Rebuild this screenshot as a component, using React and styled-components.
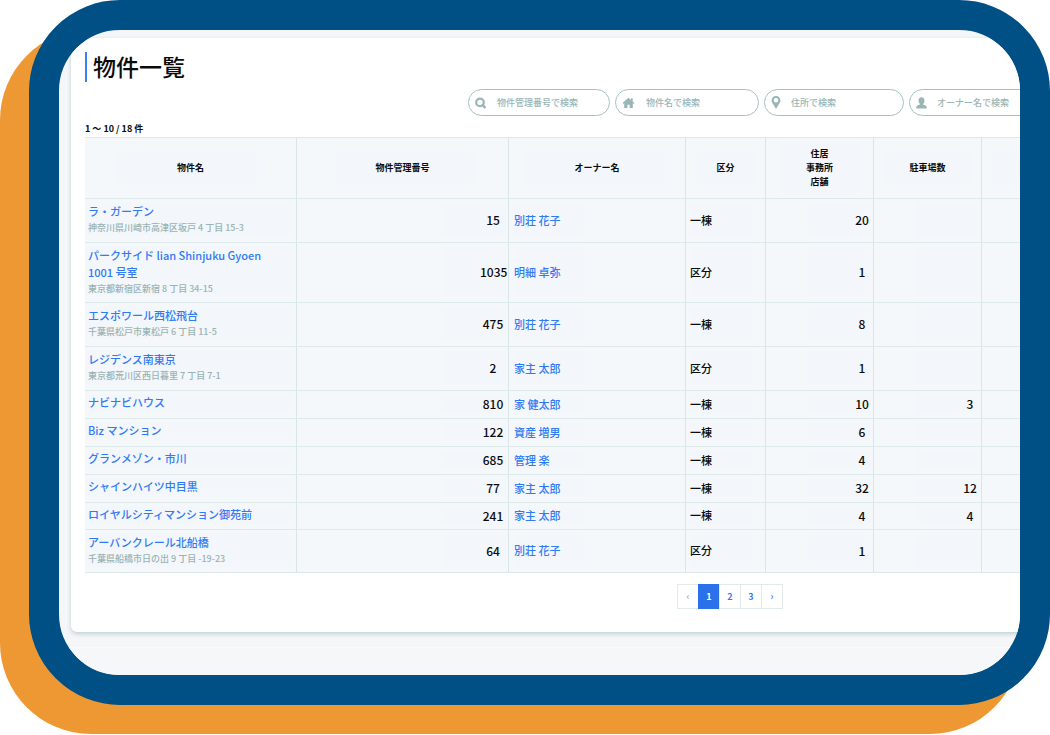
import React from "react";
import styled, { createGlobalStyle } from "styled-components";

const GlobalStyle = createGlobalStyle`
  *, *::before, *::after { box-sizing: border-box; }
  body {
    margin: 0;
    background: #fff;
    color: #0b0b0b;
    font-family: "Noto Sans CJK JP", sans-serif;
    font-size: 11px;
    font-weight: 500;
  }
`;

const Stage = styled.div`
  position: relative;
  padding: 0 0 29px 29px;
  overflow: hidden;
  &::before {
    content: "";
    position: absolute;
    inset: 29px 29px 0 0;
    border-radius: 91px;
    background: #ee9834;
  }
`;

const Frame = styled.div`
  position: relative;
  overflow: hidden;
  border: 30px solid #004f85;
  border-radius: 91px;
  background: #f4f6f8;
  padding: 8px 0 0 12px;
`;

const Card = styled.main`
  min-width: 1318px;
  padding: 14px 14px 23px;
  border-radius: 6px;
  background: #fff;
  box-shadow: 0 2px 4px #c0d0d4;
`;

const Title = styled.h1`
  margin: 0;
  padding: 0 0 2px 6px;
  border-left: 2px solid #3b7ff5;
  font-size: 23px;
  font-weight: 500;
  line-height: 28px;
`;

const SearchBar = styled.form`
  display: flex;
  gap: 5px;
  margin-top: 7px;
  padding-left: 383px;
`;

const SearchField = styled.label`
  display: flex;
  align-items: center;
  width: ${(p) => p.$width}px;
  height: 27px;
  padding-left: 6px;
  gap: ${(p) => p.$gap}px;
  border: 1px solid #a6bfc0;
  border-radius: 14px;
  color: #9ab5b5;
  svg { flex: none; }
`;

const SearchInput = styled.input`
  flex: 1;
  min-width: 0;
  padding: 0;
  border: 0;
  outline: 0;
  background: transparent;
  font: 500 9px/14px "Noto Sans CJK JP", sans-serif;
  &::placeholder { color: #9ab5b5; opacity: 1; }
`;

const Count = styled.p`
  margin: 6px 0 1px;
  font-size: 9px;
  font-weight: 700;
  line-height: 14px;
`;

const Table = styled.table`
  width: 100%;
  table-layout: fixed;
  border-collapse: separate;
  border-spacing: 0;
  border-top: 1px solid #dde8ea;
  background: #f4f8fa;
`;

const Col = styled.col`
  width: ${(p) => (p.$width ? `${p.$width}px` : "auto")};
`;

const Row = styled.tr`
  height: ${(p) => p.$height}px;
`;

const Head = styled.th`
  padding: 0;
  border-right: 1px solid #d9e5e7;
  border-bottom: 1px solid #dde9eb;
  font-size: 9px;
  font-weight: 700;
  line-height: 14px;
`;

const HeadPatch = styled.div`
  display: flex;
  align-items: center;
  justify-content: center;
  width: ${(p) => p.$width}px;
  height: ${(p) => (p.$tall ? 54 : 34)}px;
  margin: 0 auto;
  background: #f3f6fa;
  white-space: pre-line;
`;

const Cell = styled.td`
  padding: 3px 2px 5px ${(p) => p.$left || 0}px;
  border-right: 1px solid #d9e5e7;
  border-bottom: 1px solid #dde9eb;
  vertical-align: ${(p) => (p.$top ? "top" : "middle")};
`;

const NamePatch = styled.div`
  width: 206px;
  padding: ${(p) => (p.$tall ? 1 : 0)}px 0 0 3px;
  background: #f3f6fa;
`;

const TextPatch = styled.div`
  width: ${(p) => p.$width}px;
  line-height: ${(p) => p.$height - 10}px;
  background: #f3f6fa;
`;

const NumberPatch = styled.div`
  width: 64px;
  height: ${(p) => p.$height - 10}px;
  margin-left: auto;
  padding-left: ${(p) => p.$inset}px;
  background: #f3f6fa;
  font-size: 12px;
  line-height: ${(p) => p.$height - 10}px;
  text-align: center;
`;

const Link = styled.a`
  color: #2f7bf6;
  text-decoration: none;
  white-space: pre-line;
`;

const NameLink = styled(Link)`
  display: block;
  line-height: 17px;
`;

const Address = styled.div`
  color: #9ab3b3;
  font-size: 9px;
  line-height: 16px;
`;

const Pager = styled.nav`
  display: flex;
  justify-content: center;
  margin-top: 11px;
`;

const PageButton = styled.button`
  width: 22px;
  height: 25px;
  margin: 0;
  padding: 0;
  border: 1px solid ${(p) => (p.$active ? "#2b72ea" : "#e2eaec")};
  background: ${(p) => (p.$active ? "#2b72ea" : "#fff")};
  color: ${(p) => (p.$active ? "#fff" : p.disabled ? "#9ab3b3" : "#2f7bf6")};
  font: 700 9px/14px "Noto Sans CJK JP", sans-serif;
  & + & { margin-left: -1px; }
`;

const Footer = styled.footer`
  height: 28px;
  margin: 15px 0 0 -12px;
  border-top: 1px solid #fafbfc;
  background: #f5f7f9;
`;

const SearchIcon = () => (
  <svg width="12" height="12" viewBox="0 0 12 12" fill="none" stroke="currentColor" aria-hidden="true">
    <circle cx="5" cy="5.4" r="3.8" strokeWidth="2.2" />
    <path d="M7.600 8l2 2.200" strokeWidth="2.600" strokeLinecap="round" />
  </svg>
);

const HomeIcon = () => (
  <svg width="13" height="12" viewBox="0 0 13 12" fill="currentColor" aria-hidden="true">
    <path d="M6.5.8L.5 6.1l.7.8 1-.8v4.8h3.2V7.8h2.2v3.1h3.2V6.1l1 .8.7-.8-1.8-1.6V1.2H9v1.7z" />
  </svg>
);

const PinIcon = () => (
  <svg width="10" height="13" viewBox="0 0 9 13" fill="currentColor" fillRule="evenodd" aria-hidden="true">
    <path d="M4.5 0A4.4 4.4 0 0 0 .1 4.4c0 1 .3 1.8.8 2.6l3.6 6 3.6-6c.5-.8.8-1.6.8-2.6A4.4 4.4 0 0 0 4.5 0zm0 2a2.3 2.3 0 1 1 0 4.6 2.3 2.3 0 0 1 0-4.6z" />
  </svg>
);

const PersonIcon = () => (
  <svg width="11" height="12" viewBox="0 0 11 12" fill="currentColor" aria-hidden="true">
    <path d="M5.5.3C3.700.3 2.500 1.600 2.500 3.400c0 1.500.6 2.700 1.500 3.500v.5C2 8 .3 8.500.3 10.300v1.200h10.400v-1.200C10.700 8.500 9 8 7 7.400v-.5c.9-.8 1.500-2 1.500-3.500C8.500 1.600 7.300.3 5.500.3z" />
  </svg>
);

const searches = [
  { Icon: SearchIcon, label: "物件管理番号で検索", width: 142, gap: 10 },
  { Icon: HomeIcon, label: "物件名で検索", width: 144, gap: 11 },
  { Icon: PinIcon, label: "住所で検索", width: 140, gap: 10 },
  { Icon: PersonIcon, label: "オーナー名で検索", width: 144, gap: 10 },
];

const columns = [
  { label: "物件名", width: 212, patch: 145 },
  { label: "物件管理番号", width: 212, patch: 147 },
  { label: "オーナー名", width: 177, patch: 147 },
  { label: "区分", width: 80, patch: 61 },
  { label: "住居\n事務所\n店舗", width: 108, patch: 78, tall: true },
  { label: "駐車場数", width: 108, patch: 86 },
  { label: "", width: 108, patch: 88 },
  { label: "", width: 0, patch: 88 },
];

const rows = [
  { name: "ラ・ガーデン", address: "神奈川県川崎市高津区坂戸 4 丁目 15-3", no: 15, owner: "別荘 花子", type: "一棟", units: 20, height: 44 },
  { name: "パークサイド lian Shinjuku Gyoen\n1001 号室", address: "東京都新宿区新宿 8 丁目 34-15", no: 1035, owner: "明細 卓弥", type: "区分", units: 1, height: 60 },
  { name: "エスポワール西松飛台", address: "千葉県松戸市東松戸 6 丁目 11-5", no: 475, owner: "別荘 花子", type: "一棟", units: 8, height: 44 },
  { name: "レジデンス南東京", address: "東京都荒川区西日暮里 7 丁目 7-1", no: 2, owner: "家主 太郎", type: "区分", units: 1, height: 44 },
  { name: "ナビナビハウス", no: 810, owner: "家 健太郎", type: "一棟", units: 10, parking: 3, height: 28 },
  { name: "Biz マンション", no: 122, owner: "資産 増男", type: "一棟", units: 6, height: 28 },
  { name: "グランメゾン・市川", no: 685, owner: "管理 楽", type: "一棟", units: 4, height: 28 },
  { name: "シャインハイツ中目黒", no: 77, owner: "家主 太郎", type: "一棟", units: 32, parking: 12, height: 28 },
  { name: "ロイヤルシティマンション御苑前", no: 241, owner: "家主 太郎", type: "一棟", units: 4, parking: 4, height: 27 },
  { name: "アーバンクレール北船橋", address: "千葉県船橋市日の出 9 丁目 -19-23", no: 64, owner: "別荘 花子", type: "区分", units: 1, height: 43 },
];

export default function App() {
  return (
    <>
      <GlobalStyle />
      <Stage>
        <Frame>
          <Card>
            <Title>物件一覧</Title>
            <SearchBar>
              {searches.map(({ Icon, label, width, gap }) => (
                <SearchField key={label} $width={width} $gap={gap}>
                  <Icon />
                  <SearchInput type="text" placeholder={label} aria-label={label} />
                </SearchField>
              ))}
            </SearchBar>
            <Count>1 〜 10 / 18 件</Count>
            <Table>
              <colgroup>
                {columns.map((c, i) => (
                  <Col key={i} $width={c.width} />
                ))}
              </colgroup>
              <thead>
                <Row $height={61}>
                  {columns.map((c, i) => (
                    <Head key={i} scope="col">
                      <HeadPatch $width={c.patch} $tall={c.tall}>{c.label}</HeadPatch>
                    </Head>
                  ))}
                </Row>
              </thead>
              <tbody>
                {rows.map((r) => (
                  <Row key={r.name} $height={r.height}>
                    <Cell $top>
                      <NamePatch $tall={Boolean(r.address)}>
                        <NameLink href="#">{r.name}</NameLink>
                        {r.address && <Address>{r.address}</Address>}
                      </NamePatch>
                    </Cell>
                    <Cell>
                      <NumberPatch $height={r.height} $inset={38}>{r.no}</NumberPatch>
                    </Cell>
                    <Cell $left={5}>
                      <TextPatch $height={r.height} $width={71}>
                        <Link href="#">{r.owner}</Link>
                      </TextPatch>
                    </Cell>
                    <Cell $left={4}>
                      <TextPatch $height={r.height} $width={63}>{r.type}</TextPatch>
                    </Cell>
                    <Cell>
                      <NumberPatch $height={r.height} $inset={46}>{r.units}</NumberPatch>
                    </Cell>
                    <Cell>
                      <NumberPatch $height={r.height} $inset={46}>{r.parking}</NumberPatch>
                    </Cell>
                    <Cell />
                    <Cell />
                  </Row>
                ))}
              </tbody>
            </Table>
            <Pager aria-label="ページ">
              <PageButton type="button" disabled>‹</PageButton>
              <PageButton type="button" $active>1</PageButton>
              <PageButton type="button">2</PageButton>
              <PageButton type="button">3</PageButton>
              <PageButton type="button">›</PageButton>
            </Pager>
          </Card>
          <Footer />
        </Frame>
      </Stage>
    </>
  );
}
